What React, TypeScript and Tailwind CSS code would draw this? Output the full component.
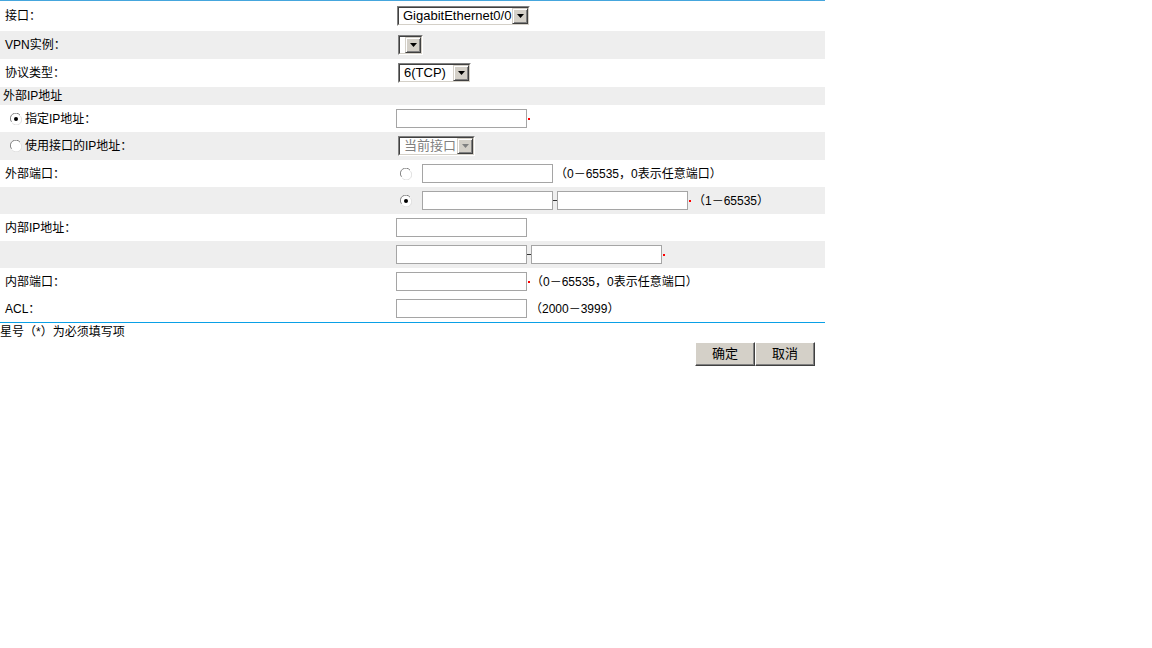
import React from 'react';

const font = { fontFamily: '"Liberation Sans", "Noto Sans CJK SC", sans-serif' };

function Arrow({ disabled }: { disabled?: boolean }) {
  return (
    <div className="flex h-full w-[16px] shrink-0 items-center justify-center border border-t-[#d4d0c8] border-l-[#d4d0c8] border-r-[#404040] border-b-[#404040] bg-[#d4d0c8] shadow-[inset_1px_1px_0_#ffffff,inset_-1px_-1px_0_#808080]">
      <svg width="7" height="4" viewBox="0 0 7 4">
        <path d="M0 0h7L3.5 4z" fill={disabled ? '#808080' : '#000000'} />
      </svg>
    </div>
  );
}

function Select({ width, text, disabled }: { width: string; text?: string; disabled?: boolean }) {
  return (
    <div
      className={`flex h-[20px] ${width} items-stretch border border-t-[#808080] border-l-[#808080] border-r-[#ffffff] border-b-[#ffffff] bg-white`}
    >
      <div className="flex flex-1 items-stretch border border-t-[#404040] border-l-[#404040] border-r-[#d4d0c8] border-b-[#d4d0c8]">
        <div
          className={`flex flex-1 items-center overflow-hidden whitespace-nowrap pl-[4px] text-[13px] ${disabled ? 'text-[#808080]' : 'text-black'}`}
        >
          {text}
        </div>
        <Arrow disabled={disabled} />
      </div>
    </div>
  );
}

function Input({ width = 'w-[131px]' }: { width?: string }) {
  return <div className={`h-[19px] ${width} shrink-0 border border-[#a5a5a5] bg-white`} />;
}

function Req() {
  return <span className="mx-[1px] inline-block h-[2px] w-[2px] shrink-0 bg-[#ff0000]" />;
}

function Dash() {
  return <span className="h-[1px] w-[4px] shrink-0 bg-[#333333]" />;
}

function Radio({ checked }: { checked?: boolean }) {
  return (
    <svg width="12" height="12" viewBox="0 0 12 12" className="shrink-0">
      <circle cx="6" cy="6" r="5.5" fill="#ffffff" />
      <path d="M10 2.2A5.3 5.3 0 0 0 1.5 8.8" stroke="#808080" fill="none" strokeWidth="1" />
      <path d="M2.2 10A5.3 5.3 0 0 0 10.5 3.2" stroke="#e0e0e0" fill="none" strokeWidth="1" />
      {checked && <circle cx="6" cy="6" r="2" fill="#000000" />}
    </svg>
  );
}

function Row({
  h,
  gray,
  label,
  children,
}: {
  h: string;
  gray?: boolean;
  label?: React.ReactNode;
  children?: React.ReactNode;
}) {
  return (
    <div className={`flex ${h} items-center ${gray ? 'bg-[#eeeeee]' : 'bg-white'}`}>
      <div className="flex w-[396px] shrink-0 items-center">{label}</div>
      <div className="flex items-center">{children}</div>
    </div>
  );
}

export default function App() {
  return (
    <div className="min-h-screen bg-white text-[12px] text-black" style={font}>
      <div className="w-[825px] border-t border-b border-t-[#45a6dd] border-b-[#0aa0e6]">
        <Row h="h-[30px]" label={<span className="pl-[5px]">接口：</span>}>
          <div className="pl-[1px]">
            <Select width="w-[133px]" text="GigabitEthernet0/0" />
          </div>
        </Row>
        <Row h="h-[28px]" gray label={<span className="pl-[5px]">VPN实例：</span>}>
          <div className="pl-[2px]">
            <Select width="w-[25px]" />
          </div>
        </Row>
        <Row h="h-[28px]" label={<span className="pl-[5px]">协议类型：</span>}>
          <div className="pl-[2px]">
            <Select width="w-[73px]" text="6(TCP)" />
          </div>
        </Row>
        <Row h="h-[18px]" gray label={<span className="pl-[3px]">外部IP地址</span>} />
        <Row
          h="h-[27px]"
          label={
            <span className="flex items-center gap-[3px] pl-[10px]">
              <Radio checked />
              指定IP地址：
            </span>
          }
        >
          <Input />
          <Req />
        </Row>
        <Row
          h="h-[28px]"
          gray
          label={
            <span className="flex items-center gap-[3px] pl-[10px]">
              <Radio />
              使用接口的IP地址：
            </span>
          }
        >
          <div className="pl-[2px]">
            <Select width="w-[77px]" text="当前接口" disabled />
          </div>
        </Row>
        <Row h="h-[27px]" label={<span className="pl-[5px]">外部端口：</span>}>
          <div className="flex items-center pl-[4px]">
            <Radio />
            <div className="ml-[10px]">
              <Input />
            </div>
            <span className="ml-[2px]">（0－65535，0表示任意端口）</span>
          </div>
        </Row>
        <Row h="h-[27px]" gray>
          <div className="flex items-center pl-[4px]">
            <Radio checked />
            <div className="ml-[10px] flex items-center">
              <Input />
              <Dash />
              <Input />
              <Req />
            </div>
            <span className="ml-[1px]">（1－65535）</span>
          </div>
        </Row>
        <Row h="h-[27px]" label={<span className="pl-[5px]">内部IP地址：</span>}>
          <Input />
        </Row>
        <Row h="h-[27px]" gray>
          <Input />
          <Dash />
          <Input />
          <Req />
        </Row>
        <Row h="h-[27px]" label={<span className="pl-[5px]">内部端口：</span>}>
          <Input />
          <Req />
          <span>（0－65535，0表示任意端口）</span>
        </Row>
        <Row h="h-[27px]" label={<span className="pl-[5px]">ACL：</span>}>
          <Input />
          <span className="ml-[3px]">（2000－3999）</span>
        </Row>
      </div>
      <div className="w-[825px]">
        <div className="h-[18px] leading-[18px]">星号（*）为必须填写项</div>
        <div className="flex justify-end pr-[10px] pt-[1px]">
          <button className="h-[24px] w-[60px] border border-t-[#ffffff] border-l-[#ffffff] border-r-[#404040] border-b-[#404040] bg-[#d4d0c8] text-[13px] shadow-[inset_-1px_-1px_0_#808080]">
            确定
          </button>
          <button className="h-[24px] w-[60px] border border-t-[#ffffff] border-l-[#ffffff] border-r-[#404040] border-b-[#404040] bg-[#d4d0c8] text-[13px] shadow-[inset_-1px_-1px_0_#808080]">
            取消
          </button>
        </div>
      </div>
    </div>
  );
}
